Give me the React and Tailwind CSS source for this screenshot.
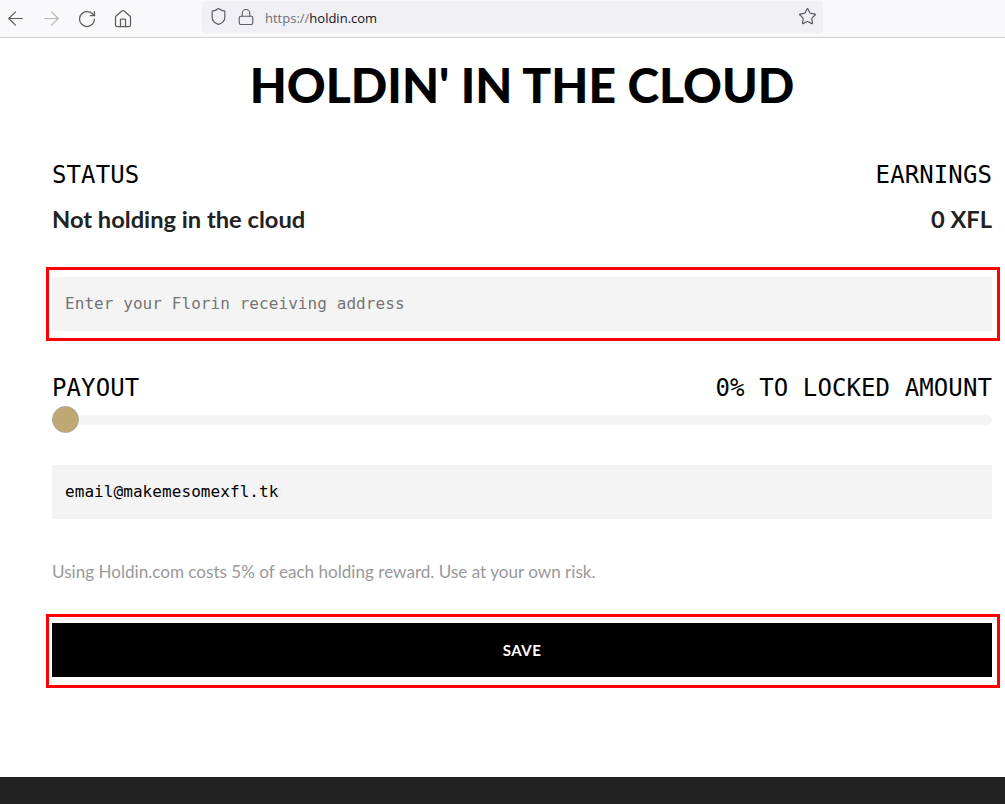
import { ArrowLeft, ArrowRight, RotateCw, Home, Shield, Lock, Star } from 'lucide-react';

const mono = "font-['DejaVu_Sans_Mono','Liberation_Mono',monospace]";
const sans = "font-['Lato','Inter',sans-serif]";

const Toolbar = () => (
  <div className="h-[38px] flex items-center bg-[#f9f9fb] border-b border-[#cfcfd8] font-['Open_Sans','Noto_Sans',sans-serif]">
    <div className="flex items-center w-[202px] pl-[4px] text-[#5b5b66]">
      <ArrowLeft size={23} strokeWidth={1.2} />
      <ArrowRight size={23} strokeWidth={1.2} className="ml-[13px] text-[#b4b4bb]" />
      <RotateCw size={20} strokeWidth={1.5} className="ml-[14px]" />
      <Home size={20} strokeWidth={1.5} className="ml-[16px]" />
    </div>
    <div className="w-[621px] h-[32px] flex items-center bg-[#f0f0f4] rounded-[4px] pl-[7px] pr-[6px] -mt-[4px] text-[#5b5b66]">
      <Shield size={19} strokeWidth={1.5} />
      <Lock size={18} strokeWidth={1.5} className="ml-[9px]" />
      <span className="ml-[10px] pt-[4px] text-[13px] text-[#6f6f78]">
        https://<span className="text-[#15141a]">holdin.com</span>
      </span>
      <Star size={19} strokeWidth={1.5} className="ml-auto" />
    </div>
  </div>
);

const Label = ({ children }) => (
  <span className={`${mono} text-[24px] leading-[28px] tracking-[0.1px] text-black`}>{children}</span>
);

const App = () => {
  return (
    <div className="w-[1005px] h-[804px] overflow-hidden bg-white flex flex-col">
      <Toolbar />
      <main className="flex-1 pl-[52px] pr-[13px]">
        <h1 className={`${sans} mt-[17px] text-center text-[48px] leading-[60px] font-black text-black`}>
          HOLDIN' IN THE CLOUD
        </h1>

        <div className="mt-[46px] flex justify-between">
          <Label>STATUS</Label>
          <Label>EARNINGS</Label>
        </div>
        <div className={`${sans} mt-[16px] flex justify-between text-[23.7px] leading-[28px] font-bold text-[#222]`}>
          <span>Not holding in the cloud</span>
          <span>0 XFL</span>
        </div>

        {/* red highlight around the address field */}
        <div className="mt-[34px] -ml-[6px] -mr-[8px] border-[3px] border-[#ff0000] pl-[3px] pr-[5px] py-[7px]">
          <div className={`${mono} h-[54px] flex items-center pl-[13px] bg-[#f4f4f4] text-[16px] tracking-[0.07px] text-[#757575]`}>
            Enter your Florin receiving address
          </div>
        </div>

        <div className="mt-[33px] flex justify-between">
          <Label>PAYOUT</Label>
          <Label>0% TO LOCKED AMOUNT</Label>
        </div>
        <div className="relative mt-[13px] h-[10px] rounded-full bg-[#f4f4f4]">
          <div className="absolute left-0 top-[-9px] w-[27px] h-[27px] rounded-full bg-[#bfa873] border border-[#a8a8a0]" />
        </div>

        <div className={`${mono} mt-[40px] h-[54px] flex items-center pl-[13px] bg-[#f4f4f4] text-[16px] tracking-[0.07px] text-black`}>
          email@makemesomexfl.tk
        </div>

        <p className={`${sans} mt-[42px] text-[17.1px] leading-[22px] text-[#999]`}>
          Using Holdin.com costs 5% of each holding reward. Use at your own risk.
        </p>

        {/* red highlight around the save button */}
        <div className="mt-[31px] -ml-[6px] -mr-[8px] border-[3px] border-[#ff0000] pl-[3px] pr-[5px] pt-[6px] pb-[8px]">
          <button className={`${sans} w-full h-[54px] bg-black text-white text-[15px] font-bold tracking-[0.5px]`}>
            SAVE
          </button>
        </div>
      </main>
      <footer className="h-[27px] shrink-0 bg-[#222]" />
    </div>
  );
};

export default App;
